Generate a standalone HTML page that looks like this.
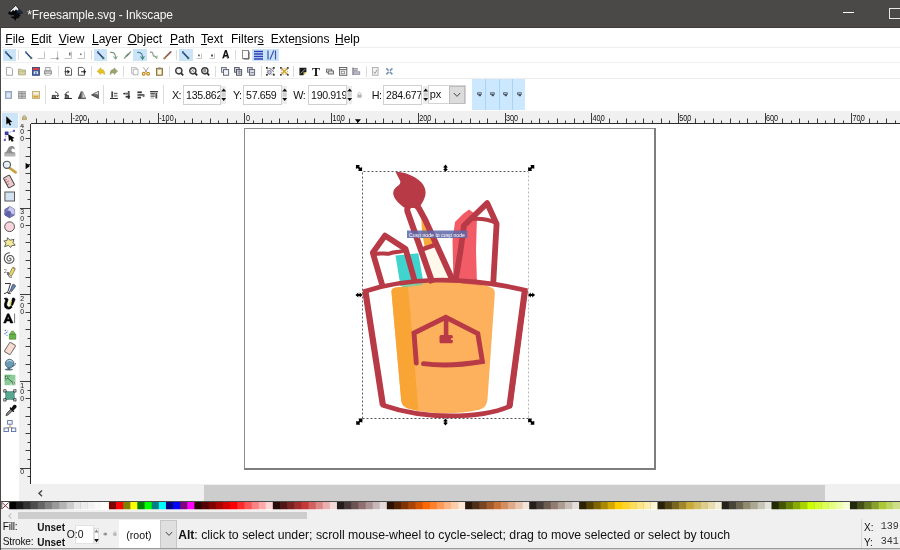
<!DOCTYPE html>
<html lang="en"><head><meta charset="utf-8"><title>*Freesample.svg - Inkscape</title>
<style>
html,body{margin:0;padding:0}
body{width:900px;height:550px;overflow:hidden;position:relative;background:#fff;font-family:"Liberation Sans",sans-serif;color:#000}
div,span,svg{position:absolute;box-sizing:border-box}
svg{overflow:visible}
.t{white-space:pre;line-height:1}
u{text-decoration:underline;text-underline-offset:1px}
#title{left:0;top:0;width:900px;height:28px;background:#4a4947}
#title .t{left:27.3px;top:8.7px;font-size:12px;letter-spacing:-0.12px;color:#f6f6f6}
.menu{top:33px;font-size:12px;color:#000}
.hl{background:#cce4f7}
.sep{width:1px;background:#dcdcdc}
.inp{background:#fff;border:1px solid #d0d0d0;height:19.5px;top:85px;overflow:hidden}
.inp .t{left:1.8px;top:4.4px;font-size:10.6px;color:#111;letter-spacing:-0.35px}
.lbl{top:90.3px;font-size:10.8px;color:#111;letter-spacing:-0.6px}
.spin{top:86px;width:5.4px;height:18px;background:#ececec}
#status{left:0;top:519px;width:900px;height:31px;background:#f0f0f0}
#status .t{color:#111}
#root{left:0;top:0;width:900px;height:550px;will-change:transform;overflow:hidden}
</style></head><body><div id="root">

<div id="title"><span class="t">*Freesample.svg - Inkscape</span>
<svg style="left:8.00px;top:5px" width="15.00" height="16.00" viewBox="0 0 15 16" ><path d="M7.7 0.3 L14.6 7.2 C15.2 8.2 14 9 12.6 8.6 L11.4 9.6 L13 11 L10.4 11.8 L11.6 13 L8.6 13.2 L7.4 15.8 L5.6 13.4 L2.6 12.6 L4.6 11 L1.6 9.4 C0 9.2 -0.2 8 0.6 7.2 Z" fill="#06080c"/><path d="M7.7 0.3 L14.6 7.2 C15 8 14.4 8.6 13.4 8.6 L10 8.2 L8 5Z" fill="#1c2a3c"/><path d="M7.7 0.8 L10.6 4.2 L9.4 5.4 L8 4.2 L6.6 6 L5 5 L3 7 L2.2 6.2 Z" fill="#f0f0f0"/><path d="M3.6 10.2 L6.4 10.8 L5 11.6Z" fill="#888"/></svg>
<div style="left:0;top:27px;width:900px;height:1px;background:#3e3d3b"></div>
<div style="left:843px;top:12px;width:11px;height:1px;background:#fff"></div>
<div style="left:889px;top:8px;width:12px;height:11px;border:1px solid #e8e8e8"></div>
</div>
<div style="left:0;top:28px;width:1px;height:522px;background:#4a4947"></div>
<span class="t menu" style="left:5.3px"><u>F</u>ile</span>
<span class="t menu" style="left:31px"><u>E</u>dit</span>
<span class="t menu" style="left:58.7px"><u>V</u>iew</span>
<span class="t menu" style="left:92px"><u>L</u>ayer</span>
<span class="t menu" style="left:127.5px"><u>O</u>bject</span>
<span class="t menu" style="left:170px"><u>P</u>ath</span>
<span class="t menu" style="left:201px"><u>T</u>ext</span>
<span class="t menu" style="left:231px">Filter<u>s</u></span>
<span class="t menu" style="left:270.8px">Exte<u>n</u>sions</span>
<span class="t menu" style="left:335px"><u>H</u>elp</span>
<div style="left:2px;top:47px;width:898px;height:1px;background:#eeeeee"></div>
<div style="left:2px;top:62px;width:898px;height:1px;background:#f0f0f0"></div>
<div style="left:2px;top:78px;width:898px;height:1px;background:#ececec"></div>
<div class="hl" style="left:2.5px;top:48.5px;width:13px;height:12.5px"></div>
<svg style="left:4.00px;top:50px" width="9.00" height="10.00" viewBox="0 0 9 10" ><path d="M1.8 2.2 L7.4 8.2" stroke="#24407e" stroke-width="1.6" stroke-linecap="round"/><circle cx="7.2" cy="8" r="1.2" fill="#3a7a65"/><circle cx="2" cy="2.4" r="1.1" fill="#4a6aa8"/></svg>
<div class="sep" style="left:18px;top:50px;height:10px"></div>
<svg style="left:24.00px;top:50px" width="9.00" height="10.00" viewBox="0 0 9 10" ><path d="M1.8 2.2 L7.4 8.2" stroke="#2c4a86" stroke-width="1.5" stroke-linecap="round"/><circle cx="7.2" cy="8" r="1.2" fill="#4d7d6a"/><circle cx="2" cy="2.4" r="1.1" fill="#5a78b0"/></svg>
<svg style="left:37.00px;top:50px" width="9.00" height="10.00" viewBox="0 0 9 10" ><path d="M0.5 8.5 H7.5 V1.5" fill="none" stroke="#c4c4c4" stroke-width="1"/></svg>
<svg style="left:50.00px;top:50px" width="9.00" height="10.00" viewBox="0 0 9 10" ><path d="M0.5 8.5 H7.5 V1.5" fill="none" stroke="#c4c4c4" stroke-width="1"/><rect x="6.5" y="7.5" width="2" height="2" fill="#888"/></svg>
<svg style="left:64.00px;top:50px" width="9.00" height="10.00" viewBox="0 0 9 10" ><path d="M0.5 8.5 H7.5 V1.5" fill="none" stroke="#c4c4c4" stroke-width="1"/><rect x="5" y="2.5" width="1.6" height="3" fill="#777"/></svg>
<svg style="left:77.00px;top:50px" width="9.00" height="10.00" viewBox="0 0 9 10" ><path d="M0.5 8.5 H7.5 V1.5" fill="none" stroke="#c4c4c4" stroke-width="1"/><rect x="3" y="3.5" width="1.6" height="1.6" fill="#777"/></svg>
<div class="sep" style="left:91px;top:50px;height:10px"></div>
<div class="hl" style="left:94px;top:48.5px;width:13px;height:12.5px"></div>
<svg style="left:96.00px;top:50px" width="9.00" height="10.00" viewBox="0 0 9 10" ><path d="M1.8 2.2 L7.4 8.2" stroke="#24407e" stroke-width="1.6" stroke-linecap="round"/><circle cx="7.2" cy="8" r="1.2" fill="#3a7a65"/><circle cx="2" cy="2.4" r="1.1" fill="#4a6aa8"/></svg>
<svg style="left:109.00px;top:50px" width="9.00" height="10.00" viewBox="0 0 9 10" ><path d="M1 2.5 C5 2 7 4 6.5 8.5" fill="none" stroke="#7a9c80" stroke-width="1.25"/><path d="M4.5 6.5 L6.6 9.3 L8.3 6.2" fill="none" stroke="#7a9c80" stroke-width="1"/></svg>
<svg style="left:122.50px;top:50px" width="9.00" height="10.00" viewBox="0 0 9 10" ><path d="M1 8.5 L8 1.5" stroke="#8a9a8a" stroke-width="1.2"/><path d="M3 6.5 L6 3.5" stroke="#6a8a78" stroke-width="1.7"/></svg>
<div class="hl" style="left:133px;top:48.5px;width:13.7px;height:12.5px"></div>
<svg style="left:135.50px;top:50px" width="9.00" height="10.00" viewBox="0 0 9 10" ><path d="M1 2.5 C5 2 7 4 6.5 8.5" fill="none" stroke="#4a8aa0" stroke-width="1.25"/><path d="M4.5 6.5 L6.6 9.3 L8.3 6.2" fill="none" stroke="#3a8a7a" stroke-width="1.1"/></svg>
<svg style="left:149.00px;top:50px" width="9.00" height="10.00" viewBox="0 0 9 10" ><path d="M1 2 L3.5 2.5 L4.5 6 L7.5 7" fill="none" stroke="#9aa39a" stroke-width="1.3"/><path d="M5.5 5.5 L7.6 8.8 L8.3 5.6" fill="none" stroke="#7fa57f" stroke-width="1"/></svg>
<svg style="left:162.50px;top:50px" width="9.00" height="10.00" viewBox="0 0 9 10" ><path d="M1.2 8.5 L7.8 1.8" stroke="#8e5a50" stroke-width="1.7" stroke-linecap="round"/><circle cx="1.6" cy="8.2" r="1.1" fill="#b98a5a"/></svg>
<div class="sep" style="left:176px;top:50px;height:10px"></div>
<div class="hl" style="left:179px;top:48.5px;width:13.5px;height:12.5px"></div>
<svg style="left:181.00px;top:50px" width="9.00" height="10.00" viewBox="0 0 9 10" ><path d="M1.8 2.2 L7.4 8.2" stroke="#24407e" stroke-width="1.6" stroke-linecap="round"/><circle cx="7.2" cy="8" r="1.2" fill="#3a7a65"/><circle cx="2" cy="2.4" r="1.1" fill="#4a6aa8"/></svg>
<svg style="left:194.00px;top:50px" width="9.00" height="10.00" viewBox="0 0 9 10" ><path d="M2.5 8.5 H7.5 V3.5" fill="none" stroke="#c8c8c8"/><rect x="4" y="4.5" width="1.8" height="1.8" fill="#666"/></svg>
<svg style="left:207.00px;top:50px" width="9.00" height="10.00" viewBox="0 0 9 10" ><path d="M2.5 8.5 H7.5 V3.5" fill="none" stroke="#c8c8c8"/><rect x="4" y="4.5" width="2" height="2" fill="#555"/></svg>
<span class="t" style="left:222.3px;top:49.6px;font-size:10px;font-weight:bold;color:#111;text-shadow:-0.6px 0.6px 0.5px #999">A</span>
<div class="sep" style="left:235px;top:50px;height:10px"></div>
<svg style="left:241.50px;top:50px" width="8.00" height="10.00" viewBox="0 0 8 10" ><rect x="0.5" y="0.5" width="6" height="8" fill="#fafafa" stroke="#8a8a8a"/><path d="M7 1.5 V9 H1.5" fill="none" stroke="#555" stroke-width="1"/></svg>
<div class="hl" style="left:251.5px;top:48.5px;width:27px;height:12.5px"></div>
<svg style="left:254.00px;top:50px" width="9.00" height="10.00" viewBox="0 0 9 10" ><path d="M0 1.5 H9 M0 4 H9 M0 6.5 H9 M0 9 H9" stroke="#2a3fb8" stroke-width="1.5"/></svg>
<svg style="left:267.00px;top:50px" width="10.00" height="10.00" viewBox="0 0 10 10" ><path d="M1 0.5 V9.5 M8.5 0.5 V9.5" stroke="#3a56b0" stroke-width="1.2"/><path d="M3 9.5 L6.8 0.5" stroke="#3a56b0" stroke-width="1.2"/></svg>
<svg style="left:5.52px;top:66.6px" width="6.96" height="8.70" viewBox="0 0 8 10" ><path d="M0.5 0.5 H5.5 L7.5 2.5 V9.5 H0.5Z" fill="#fdfdfd" stroke="#9a9a9a"/></svg>
<svg style="left:18.09px;top:66.6px" width="7.83" height="8.70" viewBox="0 0 9 10" ><path d="M0.5 2.5 H3.5 L4.5 3.5 H8.5 V9 H0.5Z" fill="#d9d5a6" stroke="#a8a47a"/><path d="M0.5 5.5 H8.5" stroke="#b8b48a"/></svg>
<svg style="left:31.59px;top:66.6px" width="7.83" height="8.70" viewBox="0 0 9 10" ><rect x="0.5" y="0.5" width="8" height="9" fill="#3e5ea8" stroke="#2c4480"/><rect x="1" y="1" width="7" height="2.6" fill="#d8403a"/><rect x="2" y="5" width="5" height="3.2" fill="#e8e8f0"/><rect x="3.8" y="5.5" width="1.4" height="4" fill="#3e5ea8"/></svg>
<svg style="left:44.09px;top:66.6px" width="7.83" height="8.70" viewBox="0 0 9 10" ><rect x="2" y="0.5" width="5" height="4" fill="#f4f4f4" stroke="#999"/><rect x="0.5" y="4.5" width="8" height="3.5" fill="#c8c8c8" stroke="#888"/><rect x="1.5" y="7.5" width="6" height="2" fill="#eee" stroke="#999" stroke-width=".6"/></svg>
<div class="sep" style="left:57.5px;top:66px;height:11px"></div>
<svg style="left:64.52px;top:66.6px" width="6.96" height="8.70" viewBox="0 0 8 10" ><path d="M0.5 0.5 H5.5 L7.5 2.5 V9.5 H0.5Z" fill="#fff" stroke="#444"/><path d="M-0.5 5.5 H4.5 M2.8 3.6 L4.8 5.5 L2.8 7.4" fill="none" stroke="#222" stroke-width="1.2"/></svg>
<svg style="left:77.52px;top:66.6px" width="6.96" height="8.70" viewBox="0 0 8 10" ><path d="M0.5 0.5 H5.5 L7.5 2.5 V9.5 H0.5Z" fill="#fff" stroke="#444"/><path d="M3.5 5.5 H8.5 M6.6 3.6 L8.6 5.5 L6.6 7.4" fill="none" stroke="#222" stroke-width="1.2"/></svg>
<div class="sep" style="left:91px;top:66px;height:11px"></div>
<svg style="left:96.58px;top:66.6px" width="7.83" height="8.70" viewBox="0 0 9 10" ><path d="M0.2 4.8 L4.4 0.8 V2.6 C7.8 2.6 9.2 5 8.8 8.8 C7.8 7.2 6.6 6.8 4.4 6.8 V8.8Z" fill="#e3c424" stroke="#c0a01a" stroke-width=".5"/></svg>
<svg style="left:109.58px;top:66.6px" width="7.83" height="8.70" viewBox="0 0 9 10" ><path d="M8.8 4.8 L4.6 0.8 V2.6 C1.2 2.6 -0.2 5 0.2 8.8 C1.2 7.2 2.4 6.8 4.6 6.8 V8.8Z" fill="#9aa470" stroke="#8a9260" stroke-width=".5"/></svg>
<div class="sep" style="left:123px;top:66px;height:11px"></div>
<svg style="left:130.52px;top:66.6px" width="6.96" height="8.70" viewBox="0 0 8 10" ><rect x="0.5" y="0.5" width="5.5" height="6.5" fill="#fff" stroke="#bbb"/><rect x="2.5" y="2.5" width="5.5" height="6.5" fill="#fdfdfd" stroke="#aaa"/></svg>
<svg style="left:142.28px;top:66.6px" width="7.83" height="8.70" viewBox="0 0 9 10" ><path d="M1.5 0.5 L6 6.5 M7.5 0.5 L3 6.5" stroke="#9a9a9a" stroke-width="1.1"/><circle cx="2" cy="7.8" r="1.6" fill="none" stroke="#c08a1a" stroke-width="1.3"/><circle cx="7" cy="7.8" r="1.6" fill="none" stroke="#c08a1a" stroke-width="1.3"/></svg>
<svg style="left:156.02px;top:66.6px" width="6.96" height="8.70" viewBox="0 0 8 10" ><rect x="0.5" y="1.5" width="7" height="8" fill="#c9a86a" stroke="#8a6a2a"/><rect x="1.8" y="3" width="4.4" height="5.5" fill="#fbf6e6"/><rect x="2.5" y="0.5" width="3" height="2" fill="#888"/></svg>
<div class="sep" style="left:168.5px;top:66px;height:11px"></div>
<svg style="left:174.65px;top:66.6px" width="8.70" height="8.70" viewBox="0 0 10 10" ><circle cx="4.4" cy="4.4" r="3.6" fill="#eef1f5" stroke="#3a3a3a" stroke-width="1.6"/><path d="M7.2 7.2 L9.4 9.6" stroke="#222" stroke-width="2"/></svg>
<svg style="left:188.65px;top:66.6px" width="8.70" height="8.70" viewBox="0 0 10 10" ><circle cx="4.4" cy="4.4" r="3.6" fill="#eef1f5" stroke="#3a3a3a" stroke-width="1.6"/><path d="M7.2 7.2 L9.4 9.6" stroke="#222" stroke-width="2"/><path d="M2.2 2.2 L6.2 6.2 M6.2 2.2 L2.2 6.2" stroke="#777" stroke-width=".8"/></svg>
<svg style="left:201.15px;top:66.6px" width="8.70" height="8.70" viewBox="0 0 10 10" ><circle cx="4.4" cy="4.4" r="3.6" fill="#eef1f5" stroke="#3a3a3a" stroke-width="1.6"/><path d="M7.2 7.2 L9.4 9.6" stroke="#222" stroke-width="2"/><rect x="2.5" y="2.2" width="3.4" height="4" fill="#999"/></svg>
<div class="sep" style="left:214.5px;top:66px;height:11px"></div>
<svg style="left:221.09px;top:66.6px" width="7.83" height="8.70" viewBox="0 0 9 10" ><rect x="0.5" y="0.5" width="5.5" height="5.5" fill="#dce6ee" stroke="#667"/><rect x="2.8" y="3" width="6" height="6.5" fill="#eef4f8" stroke="#556"/></svg>
<svg style="left:233.59px;top:66.6px" width="7.83" height="8.70" viewBox="0 0 9 10" ><rect x="0.5" y="0.5" width="5.5" height="5.5" fill="#ccd" stroke="#556"/><rect x="2.8" y="3" width="6" height="6.5" fill="#dde4ea" stroke="#445"/><path d="M4 5 H8 M4 7 H8 M6 3.5 V9" stroke="#667" stroke-width=".7"/></svg>
<svg style="left:247.09px;top:66.6px" width="7.83" height="8.70" viewBox="0 0 9 10" ><rect x="0.5" y="0.5" width="5.5" height="5.5" fill="#ccd" stroke="#667"/><rect x="2.8" y="3" width="6" height="6.5" fill="#d6dde4" stroke="#556"/><path d="M4 6.5 H8" stroke="#667" stroke-width=".9"/></svg>
<div class="sep" style="left:260.5px;top:66px;height:11px"></div>
<svg style="left:266.15px;top:66.6px" width="8.70" height="8.70" viewBox="0 0 10 10" ><rect x="1.5" y="1.5" width="7" height="7" fill="none" stroke="#888" stroke-dasharray="1.5 1"/><circle cx="4" cy="6" r="2" fill="#cdd8e8" stroke="#668"/><path d="M4 1.5 L8.5 5" stroke="#556" stroke-width="1"/><rect x="0" y="0" width="2" height="2" fill="#333"/><rect x="8" y="8" width="2" height="2" fill="#333"/><rect x="8" y="0" width="2" height="2" fill="#333"/><rect x="0" y="8" width="2" height="2" fill="#333"/></svg>
<svg style="left:279.65px;top:66.6px" width="8.70" height="8.70" viewBox="0 0 10 10" ><rect x="1.5" y="1.5" width="7" height="7" fill="none" stroke="#aaa" stroke-dasharray="1.5 1"/><path d="M2 2 L8 8 M8 2 L2 8" stroke="#d4a017" stroke-width="1.6"/><rect x="0" y="0" width="2" height="2" fill="#444"/><rect x="8" y="8" width="2" height="2" fill="#444"/><rect x="8" y="0" width="2" height="2" fill="#444"/><rect x="0" y="8" width="2" height="2" fill="#444"/></svg>
<div class="sep" style="left:293px;top:66px;height:11px"></div>
<svg style="left:298.58px;top:66.6px" width="7.83" height="8.70" viewBox="0 0 9 10" ><path d="M0.5 1 H8.5 V5.5 L5 9.5 H0.5Z" fill="#1a1a1a"/><path d="M5.2 9.3 L8.4 5.8 L5.2 6Z" fill="#e8c840"/><path d="M2 7.5 L7 2.5" stroke="#ddd" stroke-width=".8"/></svg>
<span class="t" style="left:312px;top:65.5px;font-size:12px;font-weight:bold;font-family:'Liberation Serif',serif;color:#111">T</span>
<svg style="left:325.58px;top:66.6px" width="7.83" height="8.70" viewBox="0 0 9 10" ><rect x="0.5" y="2.5" width="6" height="3.5" fill="#f4f4f4" stroke="#666"/><rect x="2.5" y="4.5" width="6" height="3.5" fill="#e4e4e4" stroke="#555"/></svg>
<svg style="left:338.65px;top:66.6px" width="8.70" height="8.70" viewBox="0 0 10 10" ><rect x="0.5" y="0.5" width="8.5" height="9" fill="#f6f6f6" stroke="#555"/><path d="M0.5 3 H9" stroke="#555"/><rect x="2.5" y="4.8" width="4" height="3" fill="none" stroke="#777" stroke-width=".8"/></svg>
<svg style="left:352.15px;top:66.6px" width="8.70" height="8.70" viewBox="0 0 10 10" ><path d="M1 0.5 V9.5" stroke="#666"/><rect x="1.5" y="1.5" width="4.5" height="2.6" fill="#c8c8d2" stroke="#778" stroke-width=".7"/><rect x="1.5" y="5.5" width="7.5" height="3" fill="#b8b8c8" stroke="#778" stroke-width=".7"/></svg>
<div class="sep" style="left:366px;top:66px;height:11px"></div>
<svg style="left:372.02px;top:66.6px" width="6.96" height="8.70" viewBox="0 0 8 10" ><rect x="0.5" y="0.5" width="6.5" height="9" fill="#f2f2f2" stroke="#aaa"/><path d="M2 5.5 L3.5 7.5 L6 3" fill="none" stroke="#8a9a8a" stroke-width="1"/></svg>
<svg style="left:384.65px;top:66.6px" width="8.70" height="8.70" viewBox="0 0 10 10" ><path d="M1.5 1.5 L8.5 8.5 M8.5 1.5 L1.5 8.5" stroke="#7a96b4" stroke-width="2"/><circle cx="5" cy="5" r="1.2" fill="#fff"/></svg>
<svg style="left:5.48px;top:91px" width="7.04" height="7.92" viewBox="0 0 8 9" ><rect x="0.5" y="0.5" width="7" height="8" fill="#b4c6dc" stroke="#8aa0c0"/><rect x="2" y="2.4" width="4" height="5" fill="#dfe8f2"/></svg>
<svg style="left:18.04px;top:91px" width="7.92" height="7.92" viewBox="0 0 9 9" ><rect x="0.5" y="0.5" width="8" height="8" fill="#c4c4c4" stroke="#a0a0a0"/><path d="M0.5 3 H8.5 M0.5 6 H8.5 M4.5 0.5 V8.5" stroke="#8e8e8e" stroke-width="1"/></svg>
<svg style="left:32.04px;top:91px" width="7.92" height="7.92" viewBox="0 0 9 9" ><rect x="0.5" y="0.5" width="8" height="8" fill="#e2cc88" stroke="#c0aa70"/><rect x="1.5" y="1.2" width="6" height="3" fill="#f4f0e4"/><path d="M2 6.5 H7" stroke="#d0a838" stroke-width="1.6"/></svg>
<div class="sep" style="left:44.5px;top:85px;height:19px"></div>
<svg style="left:50.54px;top:91px" width="7.92" height="7.92" viewBox="0 0 9 9" ><path d="M0.5 8.5 H9" stroke="#222" stroke-width="1.2"/><path d="M1.5 8 V5 H5 V8" fill="#777" stroke="#222" stroke-width=".9"/><path d="M4.5 1 C7.5 1 8.5 3.5 7.5 6" fill="none" stroke="#222" stroke-width="1"/><path d="M6 4.8 L7.6 6.6 L9 4.6" fill="none" stroke="#222" stroke-width=".9"/></svg>
<svg style="left:64.04px;top:91px" width="7.92" height="7.92" viewBox="0 0 9 9" ><path d="M0.5 8.5 H9" stroke="#222" stroke-width="1.2"/><path d="M1.5 8 V5 H5 V8" fill="#777" stroke="#222" stroke-width=".9"/><path d="M5.5 1 C2.5 1 1.5 3 2 4.5" fill="none" stroke="#222" stroke-width="1"/><path d="M0.6 3.4 L2 5 L3.6 3.6" fill="none" stroke="#222" stroke-width=".9"/></svg>
<svg style="left:77.54px;top:91px" width="7.92" height="7.92" viewBox="0 0 9 9" ><path d="M3.8 0.5 V8 H0.5Z" fill="#555" stroke="#222" stroke-width=".7"/><path d="M5.2 0.5 V8 H8.5Z" fill="#ddd" stroke="#666" stroke-width=".7"/><path d="M0 8.6 H9" stroke="#222" stroke-width=".8"/></svg>
<svg style="left:91.04px;top:91px" width="7.92" height="7.92" viewBox="0 0 9 9" ><path d="M8.5 0.5 V8.5 L0.5 4.5Z" fill="#666" stroke="#222" stroke-width=".7"/><path d="M3 2.8 L8.5 0.5 V4.5Z" fill="#d8d8d8" stroke="#555" stroke-width=".5"/></svg>
<div class="sep" style="left:103px;top:85px;height:19px"></div>
<svg style="left:109.54px;top:91px" width="7.92" height="7.92" viewBox="0 0 9 9" ><path d="M0 8.5 H9" stroke="#222" stroke-width="1.1"/><rect x="1.5" y="0.5" width="2" height="7" fill="#444"/><rect x="4.5" y="2" width="4" height="1.6" fill="#666"/><rect x="4.5" y="4.8" width="4" height="1.6" fill="#888"/></svg>
<svg style="left:123.04px;top:91px" width="7.92" height="7.92" viewBox="0 0 9 9" ><rect x="5.5" y="0" width="2" height="9" fill="#444"/><rect x="1" y="2" width="6" height="2" fill="#666"/><rect x="3" y="5.5" width="5" height="2" fill="#333"/><path d="M0 3 H2" stroke="#222"/></svg>
<svg style="left:136.54px;top:91px" width="7.92" height="7.92" viewBox="0 0 9 9" ><rect x="0.5" y="0.5" width="5" height="2" fill="#333"/><rect x="0.5" y="3.5" width="8" height="2" fill="#555"/><rect x="0.5" y="6.5" width="4" height="2" fill="#333"/><rect x="6.5" y="5" width="2" height="2" fill="#777"/></svg>
<svg style="left:149.54px;top:91px" width="7.92" height="7.92" viewBox="0 0 9 9" ><path d="M0 0.8 H9" stroke="#222" stroke-width="1.3"/><rect x="0.5" y="2.2" width="5" height="1.8" fill="#555"/><rect x="0.5" y="5" width="5" height="1.8" fill="#777"/><rect x="6.2" y="2.2" width="2" height="6.3" fill="#444"/><rect x="0.5" y="7.5" width="4" height="1" fill="#999"/></svg>
<div class="sep" style="left:162.5px;top:85px;height:19px"></div>
<span class="t lbl" style="left:172px">X:</span>
<div class="inp" style="left:183.3px;width:37.7px"><span class="t">135.862</span></div>
<div class="spin" style="left:221.0px"></div>
<svg style="left:221.00px;top:88px" width="5.40" height="14.00" viewBox="0 0 5.4 14" ><rect x="0.8" y="4.6" width="3.8" height="4" fill="#cfcfcf"/><path d="M0.2 3.6 L2.7 0.6 L5.2 3.6Z M0.2 10 L2.7 13 L5.2 10Z" fill="#111"/></svg>
<span class="t lbl" style="left:233px">Y:</span>
<div class="inp" style="left:243.3px;width:38.4px"><span class="t">57.659</span></div>
<div class="spin" style="left:281.7px"></div>
<svg style="left:281.70px;top:88px" width="5.40" height="14.00" viewBox="0 0 5.4 14" ><rect x="0.8" y="4.6" width="3.8" height="4" fill="#cfcfcf"/><path d="M0.2 3.6 L2.7 0.6 L5.2 3.6Z M0.2 10 L2.7 13 L5.2 10Z" fill="#111"/></svg>
<span class="t lbl" style="left:293.3px">W:</span>
<div class="inp" style="left:308.3px;width:38.4px"><span class="t">190.919</span></div>
<div class="spin" style="left:346.7px"></div>
<svg style="left:346.70px;top:88px" width="5.40" height="14.00" viewBox="0 0 5.4 14" ><rect x="0.8" y="4.6" width="3.8" height="4" fill="#cfcfcf"/><path d="M0.2 3.6 L2.7 0.6 L5.2 3.6Z M0.2 10 L2.7 13 L5.2 10Z" fill="#111"/></svg>
<span class="t lbl" style="left:371.7px">H:</span>
<div class="inp" style="left:383.3px;width:39.2px"><span class="t">284.677</span></div>
<div class="spin" style="left:422.5px"></div>
<svg style="left:422.50px;top:88px" width="5.40" height="14.00" viewBox="0 0 5.4 14" ><rect x="0.8" y="4.6" width="3.8" height="4" fill="#cfcfcf"/><path d="M0.2 3.6 L2.7 0.6 L5.2 3.6Z M0.2 10 L2.7 13 L5.2 10Z" fill="#111"/></svg>
<svg style="left:356.50px;top:92px" width="5.00" height="6.00" viewBox="0 0 5 6" ><rect x="0.3" y="2.5" width="4.4" height="3.2" fill="#b4b4b4"/><path d="M1.2 2.5 V1.4 C1.2 0.2 3.8 0.2 3.8 1.4 V2.5" fill="none" stroke="#b4b4b4" stroke-width=".8"/></svg>
<div style="left:427.5px;top:85px;width:38px;height:19px;background:#fff;border:1px solid #d4d4d4"></div>
<span class="t" style="left:429.7px;top:88.5px;font-size:11px;color:#111">px</span>
<div style="left:449px;top:86px;width:16px;height:18px;background:#dcdcdc;border:1px solid #bdbdbd"></div>
<svg style="left:453.00px;top:92px" width="8.00" height="6.00" viewBox="0 0 8 6" ><path d="M0.8 1 L4 4.4 L7.2 1" fill="none" stroke="#444" stroke-width="1"/></svg>
<div style="left:472px;top:79px;width:53px;height:31px;background:#cce8ff"></div>
<div style="left:485.3px;top:79px;width:1px;height:31px;background:#a9d4f5"></div>
<div style="left:498.7px;top:79px;width:1px;height:31px;background:#a9d4f5"></div>
<div style="left:512px;top:79px;width:1px;height:31px;background:#a9d4f5"></div>
<svg style="left:476.50px;top:92px" width="5.00" height="5.00" viewBox="0 0 5 5" ><rect x="0.2" y="0.4" width="4.4" height="2.4" fill="#3a4654"/><rect x="1.6" y="2.8" width="2.4" height="1.4" fill="#4a5664"/><rect x="0.8" y="0.9" width="3.2" height="1" fill="#a8b8c8"/></svg>
<svg style="left:489.70px;top:92px" width="5.00" height="5.00" viewBox="0 0 5 5" ><rect x="0.2" y="0.4" width="4.4" height="2.4" fill="#3a4654"/><rect x="1.6" y="2.8" width="2.4" height="1.4" fill="#4a5664"/><rect x="0.8" y="0.9" width="3.2" height="1" fill="#a8b8c8"/></svg>
<svg style="left:503.00px;top:92px" width="5.00" height="5.00" viewBox="0 0 5 5" ><rect x="0.2" y="0.4" width="4.4" height="2.4" fill="#3a4654"/><rect x="1.6" y="2.8" width="2.4" height="1.4" fill="#4a5664"/><rect x="0.8" y="0.9" width="3.2" height="1" fill="#a8b8c8"/></svg>
<svg style="left:516.50px;top:92px" width="5.00" height="5.00" viewBox="0 0 5 5" ><rect x="0.2" y="0.4" width="4.4" height="2.4" fill="#3a4654"/><rect x="1.6" y="2.8" width="2.4" height="1.4" fill="#4a5664"/><rect x="0.8" y="0.9" width="3.2" height="1" fill="#a8b8c8"/></svg>
<div style="left:1px;top:111.3px;width:899px;height:12.7px;background:#f0f0f0"></div>
<div style="left:1px;top:112.8px;width:17.5px;height:388.5px;background:#fff"></div>
<div style="left:18.5px;top:124px;width:12.5px;height:360px;background:#f0f0f0"></div>
<div style="left:31px;top:124px;width:869px;height:360px;background:#fff"></div>
<svg style="left:0;top:0" width="900" height="550" viewBox="0 0 900 550" font-family="'Liberation Sans',sans-serif"><path d="M31 123.5 H900" stroke="#2a2a2a" stroke-width="1"/><path d="M30.5 123 V484" stroke="#2a2a2a" stroke-width="1"/><path d="M36.5 118.5 V123 M45.5 120.5 V123 M54.5 118.5 V123 M62.5 120.5 V123 M71.5 113 V123 M80.5 120.5 V123 M88.5 118.5 V123 M97.5 120.5 V123 M106.5 118.5 V123 M114.5 120.5 V123 M123.5 118.5 V123 M132.5 120.5 V123 M140.5 118.5 V123 M149.5 120.5 V123 M158.5 113 V123 M166.5 120.5 V123 M175.5 118.5 V123 M184.5 120.5 V123 M192.5 118.5 V123 M201.5 120.5 V123 M210.5 118.5 V123 M218.5 120.5 V123 M227.5 118.5 V123 M236.5 120.5 V123 M244.5 113 V123 M253.5 120.5 V123 M262.5 118.5 V123 M271.5 120.5 V123 M279.5 118.5 V123 M288.5 120.5 V123 M297.5 118.5 V123 M305.5 120.5 V123 M314.5 118.5 V123 M323.5 120.5 V123 M331.5 113 V123 M340.5 120.5 V123 M349.5 118.5 V123 M357.5 120.5 V123 M366.5 118.5 V123 M375.5 120.5 V123 M383.5 118.5 V123 M392.5 120.5 V123 M401.5 118.5 V123 M409.5 120.5 V123 M418.5 113 V123 M427.5 120.5 V123 M435.5 118.5 V123 M444.5 120.5 V123 M453.5 118.5 V123 M461.5 120.5 V123 M470.5 118.5 V123 M479.5 120.5 V123 M487.5 118.5 V123 M496.5 120.5 V123 M505.5 113 V123 M513.5 120.5 V123 M522.5 118.5 V123 M531.5 120.5 V123 M539.5 118.5 V123 M548.5 120.5 V123 M557.5 118.5 V123 M565.5 120.5 V123 M574.5 118.5 V123 M583.5 120.5 V123 M591.5 113 V123 M600.5 120.5 V123 M609.5 118.5 V123 M617.5 120.5 V123 M626.5 118.5 V123 M635.5 120.5 V123 M643.5 118.5 V123 M652.5 120.5 V123 M661.5 118.5 V123 M669.5 120.5 V123 M678.5 113 V123 M687.5 120.5 V123 M695.5 118.5 V123 M704.5 120.5 V123 M713.5 118.5 V123 M721.5 120.5 V123 M730.5 118.5 V123 M739.5 120.5 V123 M747.5 118.5 V123 M756.5 120.5 V123 M765.5 113 V123 M773.5 120.5 V123 M782.5 118.5 V123 M791.5 120.5 V123 M799.5 118.5 V123 M808.5 120.5 V123 M817.5 118.5 V123 M825.5 120.5 V123 M834.5 118.5 V123 M843.5 120.5 V123 M851.5 113 V123 M860.5 120.5 V123 M869.5 118.5 V123 M877.5 120.5 V123 M886.5 118.5 V123 M895.5 120.5 V123" stroke="#3c3c3c" stroke-width="1" fill="none"/><path d="M27.5 476.5 H30 M20 468.5 H30 M27.5 459.5 H30 M25.5 450.5 H30 M27.5 442.5 H30 M25.5 433.5 H30 M27.5 424.5 H30 M25.5 416.5 H30 M27.5 407.5 H30 M25.5 398.5 H30 M27.5 390.5 H30 M20 381.5 H30 M27.5 372.5 H30 M25.5 364.5 H30 M27.5 355.5 H30 M25.5 346.5 H30 M27.5 338.5 H30 M25.5 329.5 H30 M27.5 320.5 H30 M25.5 312.5 H30 M27.5 303.5 H30 M20 294.5 H30 M27.5 286.5 H30 M25.5 277.5 H30 M27.5 268.5 H30 M25.5 260.5 H30 M27.5 251.5 H30 M25.5 242.5 H30 M27.5 234.5 H30 M25.5 225.5 H30 M27.5 216.5 H30 M20 208.5 H30 M27.5 199.5 H30 M25.5 190.5 H30 M27.5 182.5 H30 M25.5 173.5 H30 M27.5 164.5 H30 M25.5 156.5 H30 M27.5 147.5 H30 M25.5 138.5 H30 M27.5 130.5 H30" stroke="#3c3c3c" stroke-width="1" fill="none"/><text transform="translate(72.6 121) scale(0.86 1)" font-size="8.4" fill="#111">-200</text><text transform="translate(159.2 121) scale(0.86 1)" font-size="8.4" fill="#111">-100</text><text transform="translate(245.9 121) scale(0.86 1)" font-size="8.4" fill="#111">0</text><text transform="translate(332.6 121) scale(0.86 1)" font-size="8.4" fill="#111">100</text><text transform="translate(419.2 121) scale(0.86 1)" font-size="8.4" fill="#111">200</text><text transform="translate(505.9 121) scale(0.86 1)" font-size="8.4" fill="#111">300</text><text transform="translate(592.6 121) scale(0.86 1)" font-size="8.4" fill="#111">400</text><text transform="translate(679.2 121) scale(0.86 1)" font-size="8.4" fill="#111">500</text><text transform="translate(765.9 121) scale(0.86 1)" font-size="8.4" fill="#111">600</text><text transform="translate(852.6 121) scale(0.86 1)" font-size="8.4" fill="#111">700</text><text transform="translate(20.2 127.6) scale(0.86 1)" font-size="8" fill="#111">4</text><text transform="translate(20.2 134.2) scale(0.86 1)" font-size="8" fill="#111">0</text><text transform="translate(20.2 140.8) scale(0.86 1)" font-size="8" fill="#111">0</text><text transform="translate(20.2 214.3) scale(0.86 1)" font-size="8" fill="#111">3</text><text transform="translate(20.2 220.9) scale(0.86 1)" font-size="8" fill="#111">0</text><text transform="translate(20.2 227.5) scale(0.86 1)" font-size="8" fill="#111">0</text><text transform="translate(20.2 301.0) scale(0.86 1)" font-size="8" fill="#111">2</text><text transform="translate(20.2 307.6) scale(0.86 1)" font-size="8" fill="#111">0</text><text transform="translate(20.2 314.2) scale(0.86 1)" font-size="8" fill="#111">0</text><text transform="translate(20.2 387.6) scale(0.86 1)" font-size="8" fill="#111">1</text><text transform="translate(20.2 394.2) scale(0.86 1)" font-size="8" fill="#111">0</text><text transform="translate(20.2 400.8) scale(0.86 1)" font-size="8" fill="#111">0</text><text transform="translate(20.2 474.3) scale(0.86 1)" font-size="8" fill="#111">0</text><path d="M354.9 119.3 H360.9 L357.9 123Z" fill="#000"/><path d="M25.6 162.8 V169.2 L30 166Z" fill="#000"/></svg>
<div style="left:18.5px;top:111px;width:12.5px;height:13px;background:#f0f0f0"></div>
<svg style="left:22.20px;top:114.8px" width="4.80" height="5.00" viewBox="0 0 4.8 5" ><rect x="0.3" y="2" width="4.2" height="2.8" fill="#cdbb7e" stroke="#9a8c58" stroke-width=".5"/><path d="M1.3 2 V1.3 C1.3 0.1 3.5 0.1 3.5 1.3 V2" fill="none" stroke="#9a9a8a" stroke-width=".8"/></svg>
<svg style="left:0;top:0" width="900" height="550" viewBox="0 0 900 550" font-family="'Liberation Sans',sans-serif"><rect x="244.5" y="128.5" width="410" height="340" fill="#fff" stroke="#8c8c8c" stroke-width="1"/><path d="M655 128 V469 M244 469 H656" stroke="#7e7e7e" stroke-width="2" fill="none"/><path d="M395.5 255.5 L418.3 253.3 L423.5 283 L400.5 286Z" fill="#40d4cf"/><path d="M453.5 284 L452.5 240 L455 222 L463 214 L469 209.5 L472.5 212 L477 216 L476 250 L477 284Z" fill="#f25c66"/><path d="M421 212 L426 218 L439 244 L425 249 L422 232Z" fill="#f9a83a"/><path d="M424 249 L438 244 L453 280 L431 282Z" fill="#fff9ec"/><path d="M391.5 292 C391.5 288 394 287.5 400 287 L430 282 C450 279.3 470 280.3 482 283 L492 288 C494.5 289 495 291 494.8 294 L487.6 398 C487 406 484 408.5 478 410 C455 415 430 414 410 409 C403 407 401.3 404 401 398 Z" fill="#fdb15c"/><path d="M391.5 292 C391.5 288 394 287.5 400 287 L408 286 L418.5 411 L410 409 C403 407 401.3 404 401 398 Z" fill="#f9a535"/><path d="M401.5 283.5 L422 281 L422.8 285 L402.5 287.5Z" fill="#6fd0a0" fill-opacity="0.8"/><path d="M462 280.5 L483 283 L481 285.6 L462 283.6Z" fill="#ee6a66"/><path d="M365.2 291.2 C400 280 455 273.5 525.3 290.3 L509.8 406.3 C480 418.8 425 419.8 383 405.2 Z" fill="none" stroke="#b73a46" stroke-width="4.7" stroke-linejoin="miter"/><path d="M365.4 291.2 L382.9 405.2 M524.9 290.3 L509.5 406.3" fill="none" stroke="#b73a46" stroke-width="6.2"/><path d="M382.8 287 L372.8 252.8 L385 235.6 L405.6 249 L415 282" fill="none" stroke="#b73a46" stroke-width="5.8" stroke-linejoin="round"/><path d="M375 254.2 C381 252 386 254.8 390 253.3 C395 251.8 400 252.3 404.5 250.5" fill="none" stroke="#b73a46" stroke-width="4"/><path d="M432.5 283 L407.5 211.5 C405.5 204 415.5 202.5 419 208.5 L425.4 220.2 L453 281" fill="none" stroke="#b73a46" stroke-width="6" stroke-linejoin="round"/><path d="M423 249.2 L438 243.8" fill="none" stroke="#b73a46" stroke-width="4.5"/><path d="M395.5 171.8 C404 172 414 175 421.7 182.8 C426 188 426.5 194 424.4 198.3 C423 202 421 205 419 208 L404 207.5 C399 203.5 394.5 199.5 393.3 194.4 C392.8 190.5 395 187.5 399 185 C401 183 400.5 180.5 399.4 179.4 Z" fill="#b73a46"/><path d="M455.3 282 L460.3 252 L464 225.5 L487.2 203.2 L496.6 224 L495 252 L493.2 284" fill="none" stroke="#b73a46" stroke-width="5.8" stroke-linejoin="round"/><path d="M471.5 219 C480 218.2 488 219.2 496.5 223" fill="none" stroke="#b73a46" stroke-width="4"/><path d="M416.3 363 L414 333 L445.8 317.2 L477.8 333.6 L482.4 361.5 C460 365.3 440 366 423.5 363.6" fill="none" stroke="#b73a46" stroke-width="4.9" stroke-linejoin="miter" stroke-linecap="round"/><path d="M446.1 318 V338" stroke="#b73a46" stroke-width="4.6"/><path d="M441 335 H451.3 Q452.8 335 452.8 336.5 V338.2 H451 V340 H452.8 V341.8 Q452.8 343.3 451.3 343.3 H441 Q439.5 343.3 439.5 341.8 V336.5 Q439.5 335 441 335Z" fill="#b73a46"/><path d="M362.5 418.5 V171.5 H528" fill="none" stroke="#5a5a5a" stroke-width="1" stroke-dasharray="2 2"/><path d="M362.5 418.5 H528" fill="none" stroke="#555" stroke-width="1" stroke-dasharray="2 2"/><path d="M528.5 171.5 V418.5" fill="none" stroke="#b8b8b8" stroke-width="1" stroke-dasharray="2 2"/><g transform="translate(359 168) scale(1 1)"><path d="M-3.1 -3.1 H0.7 L0.2 -1.2 L1.2 -0.2 L3.1 -0.7 V3.1 H-0.7 L-0.2 1.2 L-1.2 0.2 L-3.1 0.7Z" fill="#000"/></g><g transform="translate(531.2 168) scale(-1 1)"><path d="M-3.1 -3.1 H0.7 L0.2 -1.2 L1.2 -0.2 L3.1 -0.7 V3.1 H-0.7 L-0.2 1.2 L-1.2 0.2 L-3.1 0.7Z" fill="#000"/></g><g transform="translate(359.3 421.7) scale(-1 1)"><path d="M-3.1 -3.1 H0.7 L0.2 -1.2 L1.2 -0.2 L3.1 -0.7 V3.1 H-0.7 L-0.2 1.2 L-1.2 0.2 L-3.1 0.7Z" fill="#000"/></g><g transform="translate(531.2 421.7) scale(1 1)"><path d="M-3.1 -3.1 H0.7 L0.2 -1.2 L1.2 -0.2 L3.1 -0.7 V3.1 H-0.7 L-0.2 1.2 L-1.2 0.2 L-3.1 0.7Z" fill="#000"/></g><g transform="translate(445.5 168.2)"><path d="M0 -3.6 L2.4 -0.7 H1.1 V0.7 H2.4 L0 3.6 L-2.4 0.7 H-1.1 V-0.7 H-2.4Z" fill="#000"/></g><g transform="translate(445.5 422)"><path d="M0 -3.6 L2.4 -0.7 H1.1 V0.7 H2.4 L0 3.6 L-2.4 0.7 H-1.1 V-0.7 H-2.4Z" fill="#000"/></g><g transform="translate(359 295) rotate(90)"><path d="M0 -3.6 L2.4 -0.7 H1.1 V0.7 H2.4 L0 3.6 L-2.4 0.7 H-1.1 V-0.7 H-2.4Z" fill="#000"/></g><g transform="translate(531.5 295) rotate(90)"><path d="M0 -3.6 L2.4 -0.7 H1.1 V0.7 H2.4 L0 3.6 L-2.4 0.7 H-1.1 V-0.7 H-2.4Z" fill="#000"/></g><rect x="407" y="230.5" width="60.3" height="7.5" fill="#5f68a8" fill-opacity="0.86"/><text x="409" y="236.6" font-size="5.2" fill="#fff" textLength="56" lengthAdjust="spacingAndGlyphs">Cusp node to cusp node</text></svg>
<div class="hl" style="left:2px;top:113px;width:15.7px;height:14.8px"></div>
<svg style="left:0;top:0" width="32" height="550" viewBox="0 0 32 550" font-family="'Liberation Sans',sans-serif"><path d="M6.3 116.3 L6.3 124.6 L8.3 122.9 L9.8 125.6 L11.2 124.9 L9.8 122.2 L12.3 122Z" fill="#000"/><path d="M6.5 133.5 L13.5 131 M6.5 134 L5 139.5" stroke="#5a5ab8" stroke-width=".7" stroke-dasharray="1 1" fill="none"/><rect x="4.8" y="131.5" width="3.6" height="3.6" fill="#3838a8"/><rect x="13" y="129.8" width="2" height="2" fill="#5a5ac8"/><rect x="3.8" y="139" width="2" height="2" fill="#5a5ac8"/><path d="M8.2 134.2 L14.6 138 L12.3 138.7 L13.7 141 L11.8 141.7 L10.5 139.5 L8.9 141.2Z" fill="#000"/><path d="M4.5 156.3 V152.5 C6 152.5 7 151 7.5 149.5 C8.3 146.8 11 145.2 13.6 146.6 C14.8 147.3 15 148.6 14.3 149.6 C13.5 148.2 11.8 148.3 11.4 149.8 C11 151.3 12.5 152.5 15.2 152.5 V156.3Z" fill="#8e8e8e"/><rect x="4.5" y="153.4" width="10.7" height="2.9" fill="#c2c2c2" fill-opacity=".75"/><path d="M9.3 167.8 L15.6 172.4" stroke="#c9a040" stroke-width="2.6" stroke-linecap="round"/><circle cx="6.9" cy="164.8" r="3.6" fill="#e4eef8" stroke="#555" stroke-width="1.1"/><g transform="rotate(-28 9 181.5)"><rect x="5.6" y="175.8" width="6.8" height="11.4" rx="1" fill="#eccaca" stroke="#444" stroke-width="1"/><path d="M5.6 178.5 H8 M5.6 181 H9 M5.6 183.5 H8" stroke="#844" stroke-width=".6"/></g><rect x="4.9" y="192" width="9.6" height="9" fill="#d2e2f0" stroke="#5a5a5a" stroke-width="1"/><path d="M4.8 209.5 L9.8 206.5 L14.6 209.3 V215 L9.5 217.8 L4.8 215Z" fill="#7a7ac0" stroke="#4a4a80" stroke-width=".7"/><path d="M9.8 206.5 L14.6 209.3 V215 L11 213 C10.5 211 9 210.5 7.5 211Z" fill="#c8c8ec"/><path d="M7.5 211 C9 210.3 10.7 211 11 213 L9.5 217.8 L4.8 215Z" fill="#6060a8"/><circle cx="9.6" cy="226.7" r="4.9" fill="#fad4dc" stroke="#555" stroke-width="1"/><path d="M7.5 237.8 L10 240.2 L14 239.3 L13 242.6 L15.2 245.2 L11.8 245.6 L10.6 247.6 L8.6 245.4 L4.6 246.6 L6 243.2 L3.8 241 L7 240.5Z" fill="#f3ea98" stroke="#555" stroke-width=".9" stroke-linejoin="round"/><path d="M9.2 258.4 C10.6 257.6 11.6 259.3 10.6 260.4 C9.3 261.8 6.8 260.6 6.9 258.4 C7 255.6 10.8 254.4 12.8 256.6 C15.2 259.2 13.4 263.4 9.4 263.4 C6 263.4 3.8 260.6 4.5 257 C5 254.5 7.5 252.8 10 252.8" fill="none" stroke="#555" stroke-width="1.1"/><path d="M8 275 C6 272 9 271 8.5 273.5 C8 276 9.5 278 12 277" fill="none" stroke="#333" stroke-width=".9"/><path d="M9 274.5 L12.5 267.5 L15.2 269.2 L11.5 276Z" fill="#ecd860" stroke="#665" stroke-width=".7"/><path d="M12.5 267.5 L13.6 266.8 L15.6 268.2 L15.2 269.2Z" fill="#a86"/><text x="3.8" y="272.8" font-size="5.5" fill="#555">2</text><path d="M5 283.5 H10.5 L8.5 290 C8 292 6 293.5 4 293.5" fill="none" stroke="#333" stroke-width="1"/><path d="M10.2 290.8 L12.6 284.5 C14.5 284 15.5 285.2 15.4 286.5 L11.6 291.6Z" fill="#5a88c0" stroke="#334" stroke-width=".7"/><path d="M10.2 290.8 L8.2 293.8 M7 292 C8 293.5 10 293.8 11 293" stroke="#222" stroke-width=".9" fill="none"/><path d="M4.2 298.5 C7 297.6 8.8 298.5 7.6 301 C6.6 303.2 6 306.2 8 307 C9.4 307.6 10.4 306.6 11 305.8 L12 307.2 C10.8 309 8.4 309.6 6.4 308.6 C3.6 307.2 4.6 303.4 5.4 301.2 C5.8 300 5.4 299.2 4.2 298.5Z" fill="#000" stroke="#000" stroke-width=".8"/><path d="M12.5 298 C14.5 297.6 15.5 298.6 14.8 300.2 L12.6 305.4 L10.4 305 L12 300.2Z" fill="#000" stroke="#000" stroke-width=".6"/><path d="M10 301.5 L11.8 300.8 L11 305.4 L9.2 304.6Z" fill="#e8d850"/><path d="M9 313.8 L13 323 H10.4 L9.8 321 H6.6 L5.9 323 H3.6 L7.4 313.8Z M7.2 319.3 H9.2 L8.2 316.2Z" fill="#000" fill-rule="evenodd" stroke="#000" stroke-width=".5"/><path d="M14.6 313.5 V323" stroke="#777" stroke-width="1"/><path d="M9.4 334 H15.8 V339.2 H9.4Z" fill="#68b448" stroke="#3a7a28" stroke-width=".6"/><path d="M10.4 334 C10.4 332 11.4 331 12.6 331 C13.8 331 14.8 332 14.8 334Z" fill="#7ac058" stroke="#3a7a28" stroke-width=".5"/><circle cx="5.4" cy="330.5" r=".8" fill="#4868c0"/><circle cx="6.6" cy="332.6" r=".8" fill="#6888d0"/><circle cx="5" cy="333.8" r=".7" fill="#4868c0"/><circle cx="7.8" cy="331" r=".6" fill="#88a"/><circle cx="7" cy="335.4" r=".6" fill="#6888d0"/><g transform="rotate(32 10 348.5)"><rect x="6.6" y="343" width="6.8" height="11" rx="1" fill="#f8dcd0" stroke="#666" stroke-width=".9"/></g><ellipse cx="8.8" cy="369.6" rx="4" ry="1" fill="#5a7a88"/><path d="M7.6 369.5 V367 H10 V369.5Z" fill="#4a6a78"/><circle cx="9.6" cy="363.6" r="4.3" fill="#6a9ab4" stroke="#3a5a6c" stroke-width=".7"/><path d="M7 361.5 C8.5 360.2 11 360.3 12.5 361.6" fill="none" stroke="#cfe4f0" stroke-width="1"/><path d="M12 366 C14 366.5 15.4 365 15.4 363" fill="none" stroke="#3a5a6c" stroke-width=".9"/><rect x="4.6" y="374.8" width="10.8" height="10.4" fill="#8ccc98"/><path d="M4.6 374.8 H12 L4.6 382Z" fill="#5db070" fill-opacity=".7"/><path d="M15.4 385.2 H9 L15.4 379Z" fill="#c4e8c8" fill-opacity=".8"/><path d="M6.6 377.2 L13.2 383" stroke="#2a5a3a" stroke-width=".8"/><rect x="5.6" y="376.2" width="2" height="2" fill="#e8f4e8" stroke="#2a4a2a" stroke-width=".5"/><rect x="12.2" y="382" width="2" height="2" fill="#e8f4e8" stroke="#2a4a2a" stroke-width=".5"/><path d="M5 391 C8 392 12 392 14.8 391 C14 394 14 397 14.8 400 C12 399 8 399 5 400 C6 397 6 394 5 391Z" fill="#5aa890" stroke="#2a6a5a" stroke-width=".6"/><rect x="3.8" y="389.8" width="2.2" height="2.2" fill="#fff" stroke="#111" stroke-width=".7"/><rect x="13.8" y="389.8" width="2.2" height="2.2" fill="#fff" stroke="#111" stroke-width=".7"/><rect x="3.8" y="398.8" width="2.2" height="2.2" fill="#fff" stroke="#111" stroke-width=".7"/><rect x="13.8" y="398.8" width="2.2" height="2.2" fill="#fff" stroke="#111" stroke-width=".7"/><path d="M6 415.8 L6.8 413.2 L11 409 L12.6 410.6 L8.4 414.8Z" fill="#888" stroke="#222" stroke-width=".7"/><path d="M10.5 408.2 L13.4 411.2 M11.6 409.2 L14 405.8 C14.8 404.8 16.4 406 15.6 407.2 L12.6 410.2" stroke="#111" stroke-width="1.6" fill="#111" stroke-linecap="round"/><path d="M10 424.5 V427 M10 427 L6 428.5 M10 427 L13.5 428.5" stroke="#c8a878" stroke-width="1.3" fill="none"/><rect x="7.6" y="420.6" width="4.6" height="3.6" fill="#eef2fa" stroke="#4a62a0" stroke-width=".8"/><rect x="4" y="428" width="4.4" height="3.6" fill="#eef2fa" stroke="#4a62a0" stroke-width=".8"/><rect x="11.4" y="428" width="4.4" height="3.6" fill="#eef2fa" stroke="#4a62a0" stroke-width=".8"/></svg>
<div style="left:18.5px;top:484px;width:881.5px;height:17.5px;background:#f0f0f0"></div>
<div style="left:204px;top:484.8px;width:620.5px;height:16.5px;background:#cdcdcd"></div>
<svg style="left:37.50px;top:489.5px" width="5.00" height="7.00" viewBox="0 0 5 7" ><path d="M4 0.5 L1 3.3 L4 6.2" fill="none" stroke="#444" stroke-width="1.4"/></svg>
<div style="left:1px;top:501.3px;width:899px;height:8.2px;background:#4a4a4a"></div>
<svg style="left:0;top:502.2px" width="900" height="7.3" viewBox="0 0 900 8" preserveAspectRatio="none"><rect x="9.20" y="0" width="7.42" height="8" fill="#000000"/><rect x="16.32" y="0" width="7.42" height="8" fill="#1a1a1a"/><rect x="23.45" y="0" width="7.42" height="8" fill="#333333"/><rect x="30.57" y="0" width="7.42" height="8" fill="#4d4d4d"/><rect x="37.70" y="0" width="7.42" height="8" fill="#666666"/><rect x="44.83" y="0" width="7.42" height="8" fill="#808080"/><rect x="51.95" y="0" width="7.42" height="8" fill="#999999"/><rect x="59.08" y="0" width="7.42" height="8" fill="#b3b3b3"/><rect x="66.20" y="0" width="7.42" height="8" fill="#cccccc"/><rect x="73.33" y="0" width="7.42" height="8" fill="#e6e6e6"/><rect x="80.45" y="0" width="7.42" height="8" fill="#ececec"/><rect x="87.58" y="0" width="7.42" height="8" fill="#f2f2f2"/><rect x="94.70" y="0" width="7.42" height="8" fill="#f9f9f9"/><rect x="101.83" y="0" width="7.42" height="8" fill="#ffffff"/><rect x="108.95" y="0" width="7.42" height="8" fill="#800000"/><rect x="116.08" y="0" width="7.42" height="8" fill="#ff0000"/><rect x="123.20" y="0" width="7.42" height="8" fill="#808000"/><rect x="130.32" y="0" width="7.42" height="8" fill="#ffff00"/><rect x="137.45" y="0" width="7.42" height="8" fill="#008000"/><rect x="144.57" y="0" width="7.42" height="8" fill="#00ff00"/><rect x="151.70" y="0" width="7.42" height="8" fill="#008080"/><rect x="158.82" y="0" width="7.42" height="8" fill="#00ffff"/><rect x="165.95" y="0" width="7.42" height="8" fill="#000080"/><rect x="173.07" y="0" width="7.42" height="8" fill="#0000ff"/><rect x="180.20" y="0" width="7.42" height="8" fill="#800080"/><rect x="187.32" y="0" width="7.42" height="8" fill="#ff00ff"/><rect x="194.45" y="0" width="7.42" height="8" fill="#2b0000"/><rect x="201.57" y="0" width="7.42" height="8" fill="#550000"/><rect x="208.70" y="0" width="7.42" height="8" fill="#800000"/><rect x="215.82" y="0" width="7.42" height="8" fill="#aa0000"/><rect x="222.95" y="0" width="7.42" height="8" fill="#d40000"/><rect x="230.07" y="0" width="7.42" height="8" fill="#ff0000"/><rect x="237.20" y="0" width="7.42" height="8" fill="#ff2a2a"/><rect x="244.32" y="0" width="7.42" height="8" fill="#ff5555"/><rect x="251.45" y="0" width="7.42" height="8" fill="#ff8080"/><rect x="258.57" y="0" width="7.42" height="8" fill="#ffaaaa"/><rect x="265.70" y="0" width="7.42" height="8" fill="#ffd5d5"/><rect x="272.82" y="0" width="7.42" height="8" fill="#280b0b"/><rect x="279.95" y="0" width="7.42" height="8" fill="#501616"/><rect x="287.07" y="0" width="7.42" height="8" fill="#782121"/><rect x="294.20" y="0" width="7.42" height="8" fill="#a02c2c"/><rect x="301.32" y="0" width="7.42" height="8" fill="#c83737"/><rect x="308.45" y="0" width="7.42" height="8" fill="#d35f5f"/><rect x="315.57" y="0" width="7.42" height="8" fill="#de8787"/><rect x="322.70" y="0" width="7.42" height="8" fill="#e9afaf"/><rect x="329.82" y="0" width="7.42" height="8" fill="#f4d7d7"/><rect x="336.95" y="0" width="7.42" height="8" fill="#241c1c"/><rect x="344.07" y="0" width="7.42" height="8" fill="#483737"/><rect x="351.20" y="0" width="7.42" height="8" fill="#6c5353"/><rect x="358.32" y="0" width="7.42" height="8" fill="#916f6f"/><rect x="365.45" y="0" width="7.42" height="8" fill="#ac9393"/><rect x="372.57" y="0" width="7.42" height="8" fill="#c8b7b7"/><rect x="379.70" y="0" width="7.42" height="8" fill="#e3dbdb"/><rect x="386.82" y="0" width="7.42" height="8" fill="#2b1100"/><rect x="393.95" y="0" width="7.42" height="8" fill="#552200"/><rect x="401.07" y="0" width="7.42" height="8" fill="#803300"/><rect x="408.20" y="0" width="7.42" height="8" fill="#aa4400"/><rect x="415.32" y="0" width="7.42" height="8" fill="#d45500"/><rect x="422.45" y="0" width="7.42" height="8" fill="#ff6600"/><rect x="429.57" y="0" width="7.42" height="8" fill="#ff7f2a"/><rect x="436.70" y="0" width="7.42" height="8" fill="#ff9955"/><rect x="443.82" y="0" width="7.42" height="8" fill="#ffb380"/><rect x="450.95" y="0" width="7.42" height="8" fill="#ffccaa"/><rect x="458.07" y="0" width="7.42" height="8" fill="#ffe6d5"/><rect x="465.20" y="0" width="7.42" height="8" fill="#28170b"/><rect x="472.32" y="0" width="7.42" height="8" fill="#502d16"/><rect x="479.45" y="0" width="7.42" height="8" fill="#784421"/><rect x="486.57" y="0" width="7.42" height="8" fill="#a05a2c"/><rect x="493.70" y="0" width="7.42" height="8" fill="#c87137"/><rect x="500.82" y="0" width="7.42" height="8" fill="#d38d5f"/><rect x="507.95" y="0" width="7.42" height="8" fill="#deaa87"/><rect x="515.08" y="0" width="7.42" height="8" fill="#e9c6af"/><rect x="522.20" y="0" width="7.42" height="8" fill="#f4e3d7"/><rect x="529.33" y="0" width="7.42" height="8" fill="#241f1c"/><rect x="536.45" y="0" width="7.42" height="8" fill="#483e37"/><rect x="543.58" y="0" width="7.42" height="8" fill="#6c5d53"/><rect x="550.70" y="0" width="7.42" height="8" fill="#917c6f"/><rect x="557.83" y="0" width="7.42" height="8" fill="#ac9d93"/><rect x="564.95" y="0" width="7.42" height="8" fill="#c8beb7"/><rect x="572.08" y="0" width="7.42" height="8" fill="#e3dedb"/><rect x="579.20" y="0" width="7.42" height="8" fill="#2b2200"/><rect x="586.33" y="0" width="7.42" height="8" fill="#554400"/><rect x="593.45" y="0" width="7.42" height="8" fill="#806600"/><rect x="600.58" y="0" width="7.42" height="8" fill="#aa8800"/><rect x="607.70" y="0" width="7.42" height="8" fill="#d4aa00"/><rect x="614.83" y="0" width="7.42" height="8" fill="#ffcc00"/><rect x="621.95" y="0" width="7.42" height="8" fill="#ffd42a"/><rect x="629.08" y="0" width="7.42" height="8" fill="#ffdd55"/><rect x="636.20" y="0" width="7.42" height="8" fill="#ffe680"/><rect x="643.33" y="0" width="7.42" height="8" fill="#ffeeaa"/><rect x="650.45" y="0" width="7.42" height="8" fill="#fff6d5"/><rect x="657.58" y="0" width="7.42" height="8" fill="#28220b"/><rect x="664.70" y="0" width="7.42" height="8" fill="#504416"/><rect x="671.83" y="0" width="7.42" height="8" fill="#786721"/><rect x="678.95" y="0" width="7.42" height="8" fill="#a0892c"/><rect x="686.08" y="0" width="7.42" height="8" fill="#c8ab37"/><rect x="693.20" y="0" width="7.42" height="8" fill="#d3bc5f"/><rect x="700.33" y="0" width="7.42" height="8" fill="#decd87"/><rect x="707.45" y="0" width="7.42" height="8" fill="#e9ddaf"/><rect x="714.58" y="0" width="7.42" height="8" fill="#f4eed7"/><rect x="721.70" y="0" width="7.42" height="8" fill="#24221c"/><rect x="728.83" y="0" width="7.42" height="8" fill="#484537"/><rect x="735.95" y="0" width="7.42" height="8" fill="#6c6753"/><rect x="743.08" y="0" width="7.42" height="8" fill="#918a6f"/><rect x="750.20" y="0" width="7.42" height="8" fill="#aca793"/><rect x="757.33" y="0" width="7.42" height="8" fill="#c8c4b7"/><rect x="764.45" y="0" width="7.42" height="8" fill="#e3e2db"/><rect x="771.58" y="0" width="7.42" height="8" fill="#222b00"/><rect x="778.70" y="0" width="7.42" height="8" fill="#445500"/><rect x="785.83" y="0" width="7.42" height="8" fill="#668000"/><rect x="792.95" y="0" width="7.42" height="8" fill="#88aa00"/><rect x="800.08" y="0" width="7.42" height="8" fill="#aad400"/><rect x="807.20" y="0" width="7.42" height="8" fill="#ccff00"/><rect x="814.33" y="0" width="7.42" height="8" fill="#d4ff2a"/><rect x="821.45" y="0" width="7.42" height="8" fill="#ddff55"/><rect x="828.58" y="0" width="7.42" height="8" fill="#e6ff80"/><rect x="835.70" y="0" width="7.42" height="8" fill="#eeffaa"/><rect x="842.83" y="0" width="7.42" height="8" fill="#f6ffd5"/><rect x="849.95" y="0" width="7.42" height="8" fill="#22280b"/><rect x="857.08" y="0" width="7.42" height="8" fill="#445016"/><rect x="864.20" y="0" width="7.42" height="8" fill="#667821"/><rect x="871.33" y="0" width="7.42" height="8" fill="#89a02c"/><rect x="878.45" y="0" width="7.42" height="8" fill="#abc837"/><rect x="885.58" y="0" width="7.42" height="8" fill="#bcd35f"/><rect x="892.70" y="0" width="7.42" height="8" fill="#cdde87"/><rect x="899.83" y="0" width="7.42" height="8" fill="#dde9af"/><rect x="1.5" y="0" width="7.7" height="8" fill="#fff"/><path d="M2.2 0.6 L8.6 7.4 M8.6 0.6 L2.2 7.4" stroke="#7a2a2a" stroke-width="1"/><rect x="1.5" y="0" width="0.8" height="8" fill="#555"/></svg>
<div style="left:1px;top:509.5px;width:899px;height:9.5px;background:#f0f0f0"></div>
<div style="left:18.3px;top:511.5px;width:288.7px;height:7.5px;background:#cdcdcd"></div>
<svg style="left:8.00px;top:512.5px" width="4.00" height="6.00" viewBox="0 0 4 6" ><path d="M3.3 0.4 L0.8 2.9 L3.3 5.4" fill="none" stroke="#bdbdbd" stroke-width="1.1"/></svg>
<div id="status">
<span class="t" style="left:2.8px;top:3.3px;font-size:10.2px;letter-spacing:-0.25px">Fill:</span>
<span class="t" style="left:2.8px;top:18.3px;font-size:10.2px;letter-spacing:-0.25px">Stroke:</span>
<span class="t" style="left:37.2px;top:3.5px;font-size:10px;font-weight:bold">Unset</span>
<span class="t" style="left:37.2px;top:18.5px;font-size:10px;font-weight:bold">Unset</span>
<div style="left:74.5px;top:5.5px;width:19px;height:19px;background:#fff;border:1px solid #e2e2e2"></div>
<span class="t" style="left:66.7px;top:10.5px;font-size:10.4px">O:0</span>
<div style="left:94px;top:9px;width:5px;height:16px;background:#fbfbfb;border:1px solid #ddd"></div>
<svg style="left:94.00px;top:9px" width="5.00" height="16.00" viewBox="0 0 5 16" ><path d="M0.3 4.5 L2.5 1.5 L4.7 4.5Z" fill="#8a8a8a"/><path d="M0.2 11 L2.5 14.5 L4.8 11Z" fill="#111"/></svg>
<svg style="left:102.50px;top:13px" width="5.00" height="4.00" viewBox="0 0 5 4" ><ellipse cx="2.3" cy="2" rx="2.1" ry="1.5" fill="#aaa"/><circle cx="2.3" cy="2" r=".7" fill="#666"/></svg>
<svg style="left:112.50px;top:12px" width="4.00" height="5.00" viewBox="0 0 4 5" ><rect x="0.2" y="2" width="3.4" height="2.8" fill="#b8b8b8"/><path d="M1 2 V1.2 C1 0.2 2.9 0.2 2.9 1.2 V2" fill="none" stroke="#b8b8b8" stroke-width=".7"/></svg>
<div style="left:119px;top:1px;width:58px;height:30px;background:#fff"></div>
<div style="left:159.5px;top:1px;width:17.5px;height:30px;background:#dfdfdf;border:1px solid #c6c6c6"></div>
<span class="t" style="left:126.3px;top:10.8px;font-size:10.6px">(root)</span>
<svg style="left:164.50px;top:12.3px" width="8.00" height="6.00" viewBox="0 0 8 6" ><path d="M0.8 1 L4 4.4 L7.2 1" fill="none" stroke="#444" stroke-width="1"/></svg>
<span class="t" style="left:178.3px;top:9.8px;font-size:12.3px"><b style="font-size:12px">Alt</b>: click to select under; scroll mouse-wheel to cycle-select; drag to move selected or select by touch</span>
<div style="left:861px;top:0px;width:1px;height:31px;background:#d8d8d8"></div>
<span class="t" style="left:864px;top:3.6px;font-size:10px">X:</span>
<span class="t" style="left:864px;top:18.6px;font-size:10px">Y:</span>
<span class="t" style="left:880.8px;top:3px;font-size:10px;font-family:'Liberation Mono',monospace;color:#333">139</span>
<span class="t" style="left:880.8px;top:18px;font-size:10px;font-family:'Liberation Mono',monospace;color:#333">341</span>
<div style="left:0;top:29px;width:900px;height:1px;background:#9c9c9c"></div>
<div style="left:0;top:30px;width:900px;height:1px;background:#d4d4d4"></div>
</div>
<div style="left:0;top:28px;width:1px;height:522px;background:#4a4947"></div>
</div></body></html>
